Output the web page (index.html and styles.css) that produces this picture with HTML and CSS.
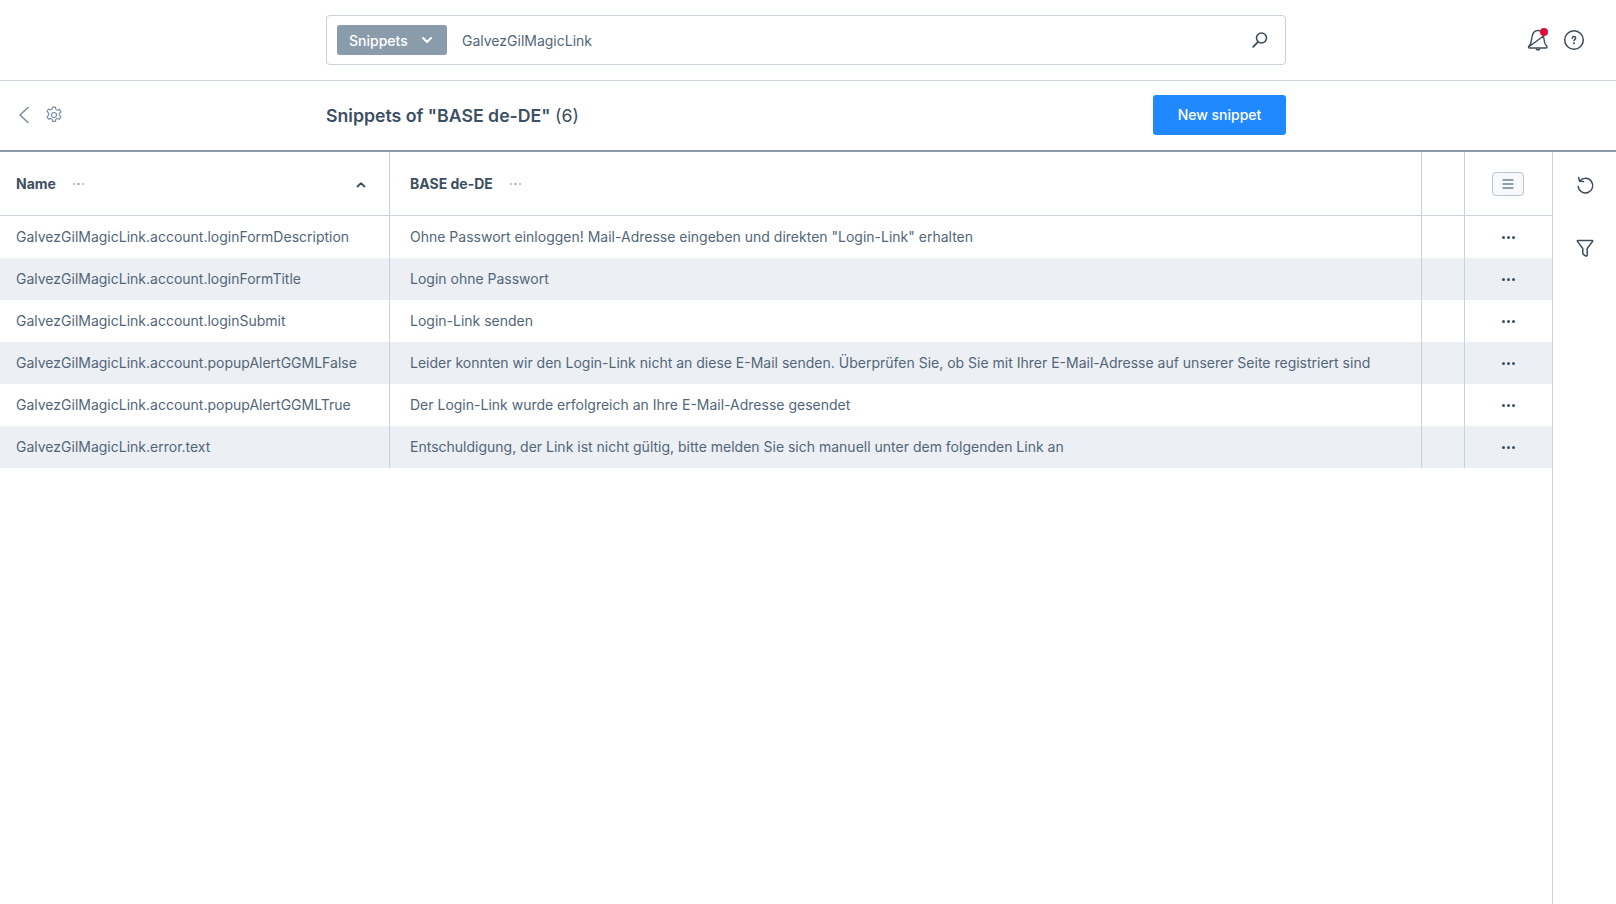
FILE: index.html
```html
<!DOCTYPE html>
<html lang="en">
  <head>
    <meta charset="UTF-8" />
    <title>Snippets</title>
    <link rel="stylesheet" href="styles.css">
  </head>
  <body>
    <header class="topbar">
      <div class="search">
        <div class="search-type">
          <span>Snippets</span>
          <svg class="search-type-arrow" width="12" height="12" viewBox="0 0 12 12"><path d="M2 4l4 4 4-4" fill="none" stroke="#fff" stroke-width="2" stroke-linecap="round" stroke-linejoin="round"/></svg>
        </div>
        <div class="search-term">GalvezGilMagicLink</div>
        <svg class="search-icon" width="18" height="18" viewBox="0 0 18 18"><circle cx="10.500" cy="7" r="5" fill="none" stroke="#3d4c5c" stroke-width="1.600"/><path d="M7 10.800L2.200 15.800" fill="none" stroke="#3d4c5c" stroke-width="1.800" stroke-linecap="round"/></svg>
      </div>
      <div class="topbar-icons">
        <div class="bell">
          <svg width="24" height="24" viewBox="0 0 24 24"><path d="M2.500 19c0-1 2-2 2.600-5l.9-5C6.600 5 9 2.500 12 2.500c1.500 0 2.800.5 3.800 1.500M17.500 8l1 6c.5 3 2.600 4 2.600 5 0 .6-.4 1-1 1H3.500c-.6 0-1-.4-1-1z" fill="none" stroke="#3d4c5c" stroke-width="1.400" stroke-linejoin="round"/><path d="M10 20.300c.2 1.100 1 1.700 2 1.700s1.800-.6 2-1.700" fill="none" stroke="#3d4c5c" stroke-width="1.300"/></svg>
          <span class="bell-dot"></span>
        </div>
        <svg width="22" height="22" viewBox="0 0 22 22"><circle cx="11" cy="11" r="9.300" fill="none" stroke="#3d4c5c" stroke-width="1.500"/><path d="M9.300 9.200c0-1.100.7-1.700 1.700-1.700s1.700.6 1.700 1.500c0 1.300-1.700 1.300-1.700 2.700" fill="none" stroke="#3d4c5c" stroke-width="1.500" stroke-linecap="round"/><circle cx="11" cy="14.300" r="1" fill="#3d4c5c"/></svg>
      </div>
    </header>

    <div class="toolbar">
      <div class="toolbar-left">
        <svg width="12" height="18" viewBox="0 0 12 18"><path d="M10 1.500L2 9l8 7.500" fill="none" stroke="#758ca3" stroke-width="1.500" stroke-linecap="round" stroke-linejoin="round"/></svg>
        <svg class="gear" width="18" height="18" viewBox="0 0 16 16"><path d="M6.700 1h2.600l.4 2 1.300.7 1.900-.7 1.300 2.300-1.500 1.300v1.500l1.500 1.300-1.300 2.300-1.900-.7-1.300.7-.4 2H6.700l-.4-2-1.300-.7-1.900.7-1.300-2.300 1.500-1.300V6.300L1.800 5l1.300-2.300 1.900.7 1.300-.7z" fill="none" stroke="#758ca3" stroke-width="1" stroke-linejoin="round"/><circle cx="8" cy="8" r="2.200" fill="none" stroke="#758ca3" stroke-width="1"/></svg>
      </div>
      <div class="toolbar-main">
        <h1 class="page-title">Snippets of "BASE de-DE" <span class="page-count">(6)</span></h1>
        <button class="new-button">New snippet</button>
      </div>
    </div>

    <main class="content">
      <div class="grid">
        <div class="row row-head">
          <div class="cell cell-name">
            <b>Name</b>
            <span class="head-dots"><i></i><i></i><i></i></span>
            <svg class="sort-arrow" width="10" height="8" viewBox="0 0 10 8"><path d="M1.500 5.500L5 2.200l3.500 3.300" fill="none" stroke="#3d4c5c" stroke-width="1.800" stroke-linecap="round" stroke-linejoin="round"/></svg>
          </div>
          <div class="cell cell-value">
            <b>BASE de-DE</b>
            <span class="head-dots"><i></i><i></i><i></i></span>
          </div>
          <div class="cell cell-empty"></div>
          <div class="cell cell-actions">
            <div class="columns-button">
              <svg width="14" height="12" viewBox="0 0 14 12"><path d="M1.500 2h11M1.500 6h11M1.500 10h11" fill="none" stroke="#6d8299" stroke-width="1.700"/></svg>
            </div>
          </div>
        </div>

        <div class="row">
          <div class="cell cell-name">GalvezGilMagicLink.account.loginFormDescription</div>
          <div class="cell cell-value">Ohne Passwort einloggen! Mail-Adresse eingeben und direkten "Login-Link" erhalten</div>
          <div class="cell cell-empty"></div>
          <div class="cell cell-actions"><span class="row-dots"><i></i><i></i><i></i></span></div>
        </div>
        <div class="row">
          <div class="cell cell-name">GalvezGilMagicLink.account.loginFormTitle</div>
          <div class="cell cell-value">Login ohne Passwort</div>
          <div class="cell cell-empty"></div>
          <div class="cell cell-actions"><span class="row-dots"><i></i><i></i><i></i></span></div>
        </div>
        <div class="row">
          <div class="cell cell-name">GalvezGilMagicLink.account.loginSubmit</div>
          <div class="cell cell-value">Login-Link senden</div>
          <div class="cell cell-empty"></div>
          <div class="cell cell-actions"><span class="row-dots"><i></i><i></i><i></i></span></div>
        </div>
        <div class="row">
          <div class="cell cell-name">GalvezGilMagicLink.account.popupAlertGGMLFalse</div>
          <div class="cell cell-value">Leider konnten wir den Login-Link nicht an diese E-Mail senden. Überprüfen Sie, ob Sie mit Ihrer E-Mail-Adresse auf unserer Seite registriert sind</div>
          <div class="cell cell-empty"></div>
          <div class="cell cell-actions"><span class="row-dots"><i></i><i></i><i></i></span></div>
        </div>
        <div class="row">
          <div class="cell cell-name">GalvezGilMagicLink.account.popupAlertGGMLTrue</div>
          <div class="cell cell-value">Der Login-Link wurde erfolgreich an Ihre E-Mail-Adresse gesendet</div>
          <div class="cell cell-empty"></div>
          <div class="cell cell-actions"><span class="row-dots"><i></i><i></i><i></i></span></div>
        </div>
        <div class="row">
          <div class="cell cell-name">GalvezGilMagicLink.error.text</div>
          <div class="cell cell-value">Entschuldigung, der Link ist nicht gültig, bitte melden Sie sich manuell unter dem folgenden Link an</div>
          <div class="cell cell-empty"></div>
          <div class="cell cell-actions"><span class="row-dots"><i></i><i></i><i></i></span></div>
        </div>
      </div>

      <aside class="sidebar">
        <svg width="20" height="20" viewBox="0 0 20 20"><path d="M5 4.800A7.300 7.300 0 1 1 3.200 10.500" fill="none" stroke="#3d4c5c" stroke-width="1.500" stroke-linecap="round"/><path d="M3.600 1.500L4.600 5.300 8.500 5.600" fill="none" stroke="#3d4c5c" stroke-width="1.500" stroke-linecap="round" stroke-linejoin="round"/></svg>
        <svg width="20" height="20" viewBox="0 0 20 20"><path d="M2.800 2.500h14.400c.5 0 .7.500.4.900L12.200 10.500v6.500c0 1-1 1.300-1.700.8l-2-1.300c-.5-.3-.7-.7-.7-1.200v-4.800L2.400 3.400c-.3-.4-.1-.9.400-.9z" fill="none" stroke="#3d4c5c" stroke-width="1.500" stroke-linejoin="round"/></svg>
      </aside>
    </main>
  </body>
</html>
```

FILE: styles.css
```css
:root {
  --text: #52667a;
  --dark: #3d4f63;
  --line: #c9d2dc;
  --stripe: #eceff4;
}

* {
  box-sizing: border-box;
}

html,
body {
  height: 100%;
}

body {
  margin: 0;
  display: flex;
  flex-direction: column;
  font-family: "Inter", sans-serif;
  font-size: 14px;
  color: var(--text);
  background: #fff;
  overflow: hidden;
}

.topbar {
  height: 81px;
  flex: none;
  display: flex;
  align-items: center;
  padding-left: 326px;
  border-bottom: 1px solid var(--line);
}

.search {
  width: 960px;
  height: 50px;
  display: flex;
  align-items: center;
  padding: 0 16px 0 10px;
  border: 1px solid var(--line);
  border-radius: 4px;
}

.search-type {
  width: 110px;
  height: 30px;
  display: flex;
  align-items: center;
  padding-left: 12px;
  background: #8a9bab;
  border-radius: 3px;
  color: #fff;
  font-weight: 500;
}

.search-type-arrow {
  margin-left: 13px;
}

.search-term {
  flex: 1;
  padding-left: 15px;
}

.topbar-icons {
  display: flex;
  align-items: center;
  gap: 13px;
  margin-left: 240px;
}

.bell {
  position: relative;
  width: 24px;
  height: 24px;
}

.bell-dot {
  position: absolute;
  top: 0;
  left: 14px;
  width: 8px;
  height: 8px;
  border-radius: 50%;
  background: #de0b3c;
}

.toolbar {
  height: 71px;
  flex: none;
  display: flex;
  align-items: center;
  border-bottom: 2px solid #8a99a8;
}

.toolbar-left {
  width: 326px;
  display: flex;
  align-items: center;
  padding: 0 0 2px 18px;
}

.gear {
  margin-left: 15px;
}

.toolbar-main {
  width: 960px;
  display: flex;
  align-items: center;
  justify-content: space-between;
}

.page-title {
  margin: 0;
  font-size: 17.700px;
  font-weight: 600;
  color: var(--dark);
}

.page-count {
  font-weight: 400;
}

.new-button {
  width: 133px;
  height: 40px;
  margin-bottom: 2px;
  border: none;
  border-radius: 3px;
  background: #2189ff;
  color: #fff;
  font-family: inherit;
  font-size: 14px;
  font-weight: 500;
}

.content {
  flex: 1;
  display: flex;
}

.grid {
  width: 1553px;
  flex: none;
  border-right: 1px solid var(--line);
}

.row {
  height: 42px;
  display: grid;
  grid-template-columns: 390px 1032px 43px 87px;
}

.row:nth-child(odd) {
  background: var(--stripe);
}

.row-head,
.row-head:nth-child(odd) {
  height: 64px;
  background: #fff;
  border-bottom: 1px solid var(--line);
}

.cell {
  display: flex;
  align-items: center;
  white-space: nowrap;
  border-right: 1px solid var(--line);
}

.cell-name {
  padding: 0 0 2px 16px;
}

.cell-value {
  padding: 0 0 2px 20px;
}

.row-head .cell-name,
.row-head .cell-value {
  padding-bottom: 0;
}

.cell-actions {
  justify-content: center;
  border-right: none;
}

.row-head b {
  font-weight: 700;
  color: var(--dark);
}

.head-dots {
  display: flex;
  gap: 2px;
  margin: 1px 0 0 17px;
}

.head-dots i {
  width: 2.500px;
  height: 2.500px;
  border-radius: 50%;
  background: #a9b6c3;
}

.sort-arrow {
  margin: 2px 23px 0 auto;
}

.columns-button {
  width: 32px;
  height: 24px;
  margin: 1px 1px 0 0;
  display: flex;
  align-items: center;
  justify-content: center;
  border: 1px solid #b9c4d0;
  border-radius: 4px;
  background: #f6f8fa;
}

.row-dots {
  display: flex;
  gap: 2px;
}

.row-dots i {
  width: 3px;
  height: 3px;
  border-radius: 50%;
  background: var(--dark);
}

.sidebar {
  flex: 1;
  display: flex;
  flex-direction: column;
  align-items: center;
  gap: 42px;
  padding-top: 24px;
}
```
